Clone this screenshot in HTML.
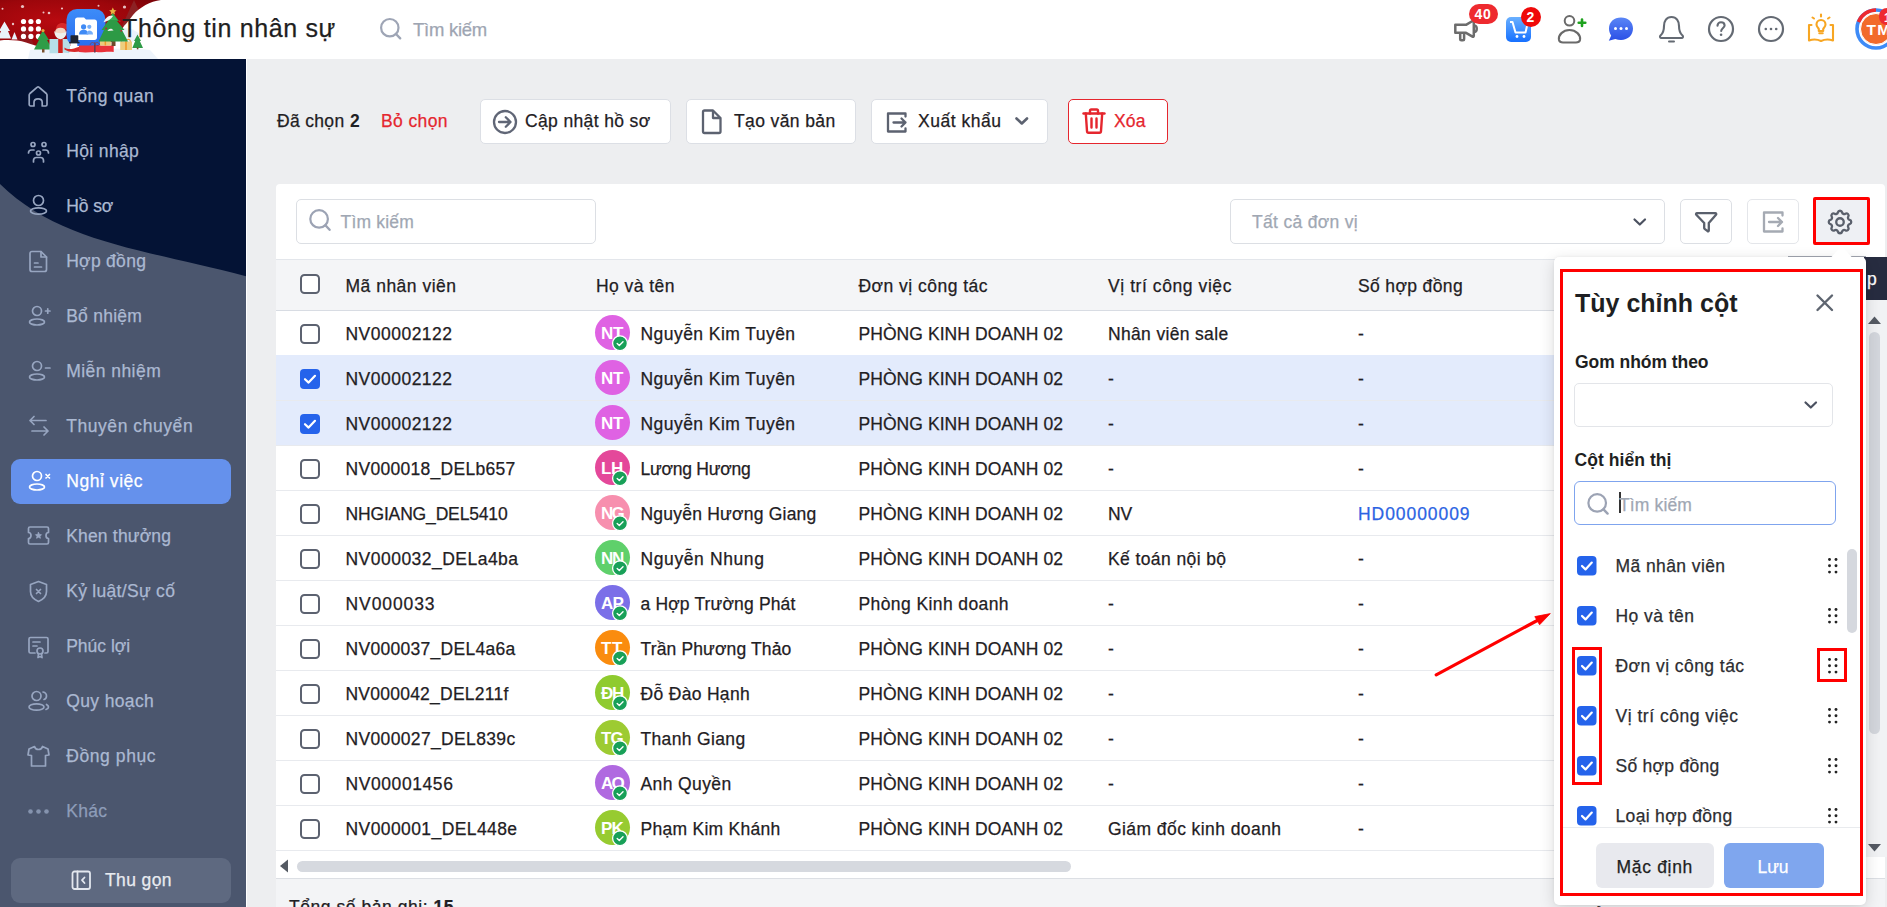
<!DOCTYPE html><html><head><meta charset="utf-8"><style>
html,body{margin:0;padding:0;width:1887px;height:907px;overflow:hidden;background:#EDEEF0;font-family:'Liberation Sans',sans-serif;}
.a{position:absolute;}
.t{white-space:nowrap;-webkit-text-stroke:0.25px currentColor;}
svg.a{overflow:visible;}
</style></head><body>

<div class="a" style="left:0px;top:0px;width:1887px;height:907px;background:#EDEEF0;border-radius:0px;"></div>
<div class="a" style="left:0px;top:0px;width:1887px;height:59px;background:#FFFFFF;border-radius:0px;"></div>
<svg class="a" style="left:0px;top:0px;width:180px;height:59px;" width="180" height="59" viewBox="0 0 180 59">
<defs>
 <radialGradient id="rg" cx="0.35" cy="0.45" r="0.8">
  <stop offset="0" stop-color="#B80A10"/><stop offset="0.6" stop-color="#9C060B"/><stop offset="1" stop-color="#760207"/>
 </radialGradient>
 <linearGradient id="bg1" x1="0" y1="0" x2="0" y2="1">
  <stop offset="0" stop-color="#3D8CF8"/><stop offset="1" stop-color="#2A6DF0"/>
 </linearGradient>
</defs>
<path d="M0,0 H161 V30 L124,38 L98,46 L0,46 Z" fill="url(#rg)"/>
<path d="M122,26 L134,0 L146,26 Z" fill="#8C2224"/>
<path d="M161,0 C150,1.5 140,7 133,15 C129,20 127,23 124,26 L116,38 L124,59 L180,59 L180,0 Z" fill="#FFFFFF"/>
<path d="M124,28 C120,32 118,36 116,40 L130,45 L140,34 C135,30 130,28 124,28 Z" fill="#EAF2FA"/>
<path d="M16,45 L25,24 L34,45 Z" fill="#8E1A1F" opacity="0.85"/>
<path d="M0,40.5 C8,39.5 18,40 26,42.5 C32,44.5 38,46.5 46,48.5 L60,50 L90,52 L130,50 C140,49 150,50 160,52 L162,59 L0,59 Z" fill="#FFFFFF"/>
<path d="M30,50 C50,47 70,48 90,51 C105,49 125,47 150,50 L158,59 L28,59 Z" fill="#EEF4FB"/>
<path d="M4.5,21.5 L10,31 L8,31 L11,38.5 L-2,38.5 L1,31 L-1,31 Z" fill="#E9F2FA"/>
<path d="M14.5,32 L17.5,39.5 L11.5,39.5 Z" fill="#E9F2FA"/>
<g fill="#FFFFFF">
 <circle cx="23.5" cy="21.5" r="2.6"/><circle cx="30.9" cy="21.5" r="2.6"/><circle cx="38.4" cy="21.5" r="2.6"/>
 <circle cx="23.5" cy="28.9" r="2.6"/><circle cx="30.9" cy="28.9" r="2.6"/><circle cx="38.4" cy="28.9" r="2.6"/>
 <circle cx="23.5" cy="36.4" r="2.6"/><circle cx="30.9" cy="36.4" r="2.6"/><circle cx="38.4" cy="36.4" r="2.6"/>
</g>
<g fill="#FFFFFF" opacity="0.75"><circle cx="22.5" cy="6.5" r="1.6"/><circle cx="2.5" cy="8.8" r="1"/><circle cx="43.5" cy="12.4" r="1"/><circle cx="49" cy="13" r="1.3"/><circle cx="62" cy="8.5" r="1.1"/><circle cx="98.5" cy="5.7" r="1"/><circle cx="124.5" cy="7" r="1.6"/><circle cx="13" cy="24" r="1.2"/></g>
<!-- left tree -->
<path d="M43,30.5 L49,40 L47,40 L52.5,49.5 L34,49.5 L39,40 L37,40 Z" fill="#2F9C47"/>
<rect x="42" y="49" width="2.5" height="3.5" fill="#7A5230"/>
<circle cx="43" cy="30.5" r="1.6" fill="#E9A93A"/>
<!-- santa -->
<path d="M49.5,39 H70 V53.3 L62,52.5 L58,53.3 L49.5,53.3 Z" fill="#B7DFE8"/>
<rect x="58.2" y="39" width="4.5" height="14" fill="#D32520"/>
<path d="M56,29 C56.5,24 60,22.8 63,23 C66,23.2 69,25.5 70.5,27.8 L67.5,29.5 Z" fill="#D82A2A"/>
<circle cx="71" cy="27.3" r="1.2" fill="#FFFFFF"/>
<ellipse cx="60.5" cy="31.5" rx="5.3" ry="3.8" fill="#F2D5C2"/>
<path d="M54.2,31 C54.5,37 58,39.2 60.5,39.2 C63,39.2 66.5,37 66.8,31 C64.8,34 56.2,34 54.2,31 Z" fill="#EEF0EC"/>
<!-- app icon -->
<rect x="66.5" y="9" width="39" height="37" rx="10.5" fill="url(#bg1)"/>
<path d="M75,20 C75,18.5 76,17.5 77.5,17.5 L84,17.5 L86,19.5 L94.5,19.5 C96,19.5 97,20.5 97,22 L97,37.5 C97,39 96,40 94.5,40 L77.5,40 C76,40 75,39 75,37.5 Z" fill="#FFFFFF"/>
<circle cx="83.6" cy="26.8" r="2.6" fill="#3F8AF5"/><circle cx="89.3" cy="26.8" r="2.1" fill="#76AEF9"/>
<path d="M79,34.5 C79,31 81.5,29.8 83.6,29.8 C85.8,29.8 88.3,31 88.3,34.5 Z" fill="#3F8AF5"/>
<path d="M86.5,34.5 C86.5,31.5 88,30.5 89.3,30.5 C91,30.5 93,31.5 93,34.5 Z" fill="#76AEF9"/>
<!-- snowman -->
<circle cx="74" cy="54" r="5" fill="#F4F6FA"/>
<circle cx="73.8" cy="45" r="3.6" fill="#FFFFFF"/>
<rect x="70.5" y="35.2" width="7.8" height="7" rx="0.8" fill="#1E2433"/><rect x="69.2" y="41.8" width="10.3" height="1.6" fill="#1E2433"/>
<path d="M64.5,47.5 C68,50 72,49.5 80,46.5 L80.5,51.5 C74,52.5 68,52 64.5,49.5 Z" fill="#D82A2A"/>
<!-- gifts -->
<path d="M79,45.5 H113.7 V52 C108,51 103,52.5 98,52.2 C92,51.8 86,53 79,52 Z" fill="#E8323A"/>
<rect x="94" y="42.5" width="1.6" height="10" fill="#6B3A50"/>
<path d="M90,45 C91,41.5 94,42 94.8,44.5 C95.6,42 98.6,41.5 99.6,45" fill="none" stroke="#7B4A6A" stroke-width="1"/>
<rect x="100" y="38.4" width="10.8" height="7.1" fill="#EACB7C"/><rect x="104.6" y="38.4" width="1.5" height="7.1" fill="#F09A28"/>
<rect x="120.2" y="41.5" width="11.8" height="8.5" fill="#EDCD7E"/><rect x="125.2" y="41.5" width="1.6" height="8.5" fill="#F09A28"/>
<path d="M121.5,41.5 C122,38.5 125,38.8 126,41 C127,38.8 130,38.5 130.5,41.5" fill="none" stroke="#F09A28" stroke-width="1.1"/>
<!-- big tree -->
<rect x="111.5" y="40" width="4" height="6" fill="#6E4A2A"/>
<path d="M112.8,13 L119,21 L117,21 L124.5,30 L122,30 L128,41.5 L98.5,41.5 L104,30 L101.5,30 L108,21 L106.5,21 Z" fill="#2D9A45"/>
<path d="M112.8,13.5 L117.5,20 L108.2,20 Z" fill="#3AB055"/>
<path d="M103.5,22.2 C106,16.5 110,15 113,16 C111,19 108,21.5 103.5,22.2 Z" fill="#F4F4F2"/>
<path d="M107.5,31 C109,28 112,28 113.5,30.5 Z" fill="#F4F4F2"/>
<circle cx="119.7" cy="21.2" r="0.9" fill="#C02030"/><circle cx="106.2" cy="28.5" r="0.9" fill="#C02030"/><circle cx="121.2" cy="30.8" r="0.9" fill="#C02030"/>
<path d="M112.8,7.5 L114,10 L116.5,10.5 L114.5,12 L115,14.5 L112.8,13.2 L110.6,14.5 L111.1,12 L109.1,10.5 L111.6,10 Z" fill="#E8B340"/>
<!-- small tree -->
<path d="M137.5,34.5 L141,41 L139.8,41 L143,48 L132.3,48 L135.2,41 L134,41 Z" fill="#2E9A46"/>
<rect x="136.8" y="47.5" width="1.6" height="1.8" fill="#6E4A2A"/>
</svg>
<div class="a t" style="left:122px;top:15.94px;font-size:25px;line-height:25px;font-weight:400;color:#1F1F1F;letter-spacing:0.648px;">Thông tin nhân sự</div>
<svg class="a" style="left:379px;top:17px;width:24px;height:24px;" width="24" height="24" viewBox="0 0 24 24"><circle cx="10.8" cy="10.7" r="8.7" fill="none" stroke="#9EA5B5" stroke-width="2.2"/><path d="M17,17 L21.2,21.3" stroke="#9EA5B5" stroke-width="2.4" stroke-linecap="round"/></svg>
<div class="a t" style="left:413px;top:21.14px;font-size:18.5px;line-height:18.5px;font-weight:400;color:#9EA5B2;letter-spacing:-0.258px;">Tìm kiếm</div>
<svg class="a" style="left:1452px;top:18px;width:30px;height:26px;" width="30" height="26" viewBox="0 0 30 26"><g fill="none" stroke="#6C6C6C" stroke-width="2.5" stroke-linejoin="round">
<path d="M3.3,6.8 H14 L20.5,3 C21.3,2.6 21.8,3 21.8,3.8 V17.8 C21.8,18.6 21.3,19 20.5,18.6 L14,14.8 H3.3 Z"/>
<path d="M8.2,15 V21.3 C8.2,22 8.6,22.3 9.3,22.3 H11 C11.7,22.3 12.1,22 12.1,21.3 V15"/>
<path d="M22.5,7.5 C25.5,8 25.5,13.5 22.5,14"/></g></svg>
<div class="a" style="left:1469px;top:4px;width:29px;height:20px;background:#EE2A2F;border-radius:10px;"></div>
<div class="a t" style="left:1474.5px;top:7.45px;font-size:14px;line-height:14px;font-weight:700;color:#FFFFFF;letter-spacing:0.711px;-webkit-text-stroke:0;">40</div>
<svg class="a" style="left:1506px;top:17px;width:26px;height:25px;" width="26" height="25" viewBox="0 0 26 25"><defs><linearGradient id="cg" x1="0" y1="0" x2="0" y2="1"><stop offset="0" stop-color="#6AB0FF"/><stop offset="1" stop-color="#1670FF"/></linearGradient></defs>
<rect x="0" y="0" width="25" height="25" rx="5" fill="url(#cg)"/>
<path d="M4,5 H6.5 L9.5,15.5 H19.5 L21,9" fill="none" stroke="#FFFFFF" stroke-width="2" stroke-linejoin="round"/>
<circle cx="11" cy="19.5" r="1.4" fill="#fff"/><circle cx="18" cy="19.5" r="1.4" fill="#fff"/></svg>
<div class="a" style="left:1521px;top:7px;width:20px;height:20px;background:#EF0A0A;border-radius:10px;"></div>
<div class="a t" style="left:1526.5px;top:9.95px;font-size:14px;line-height:14px;font-weight:700;color:#FFFFFF;letter-spacing:0.703px;-webkit-text-stroke:0;">2</div>
<svg class="a" style="left:1556px;top:14px;width:32px;height:30px;" width="32" height="30" viewBox="0 0 32 30"><circle cx="13.5" cy="6.8" r="4.8" fill="none" stroke="#6A6A6A" stroke-width="2"/>
<path d="M3,26 C2,21 7,16 13.5,16 C20,16 25,21 24,26 C23.5,28 22,28.5 20,28.5 H7 C5,28.5 3.5,28 3,26 Z" fill="none" stroke="#6A6A6A" stroke-width="2.1"/>
<path d="M26,5.5 V12 M22.7,8.8 H29.3" stroke="#1FA21F" stroke-width="2.6" stroke-linecap="round"/></svg>
<svg class="a" style="left:1608px;top:17px;width:26px;height:24px;" width="26" height="24" viewBox="0 0 26 24"><defs><linearGradient id="chg" x1="0" y1="0" x2="0" y2="1"><stop offset="0" stop-color="#5A86F6"/><stop offset="1" stop-color="#2A4FE6"/></linearGradient></defs>
<path d="M13,0.5 C20,0.5 25,5 25,11.5 C25,18 20,23 13,23 C11,23 9,22.6 7.3,22 L0.8,23.8 L3.2,18.5 C1.8,16.6 1,14.2 1,11.5 C1,5 6,0.5 13,0.5 Z" fill="url(#chg)"/>
<circle cx="7.5" cy="11.5" r="1.5" fill="#fff"/><circle cx="13" cy="11.5" r="1.5" fill="#fff"/><circle cx="18.5" cy="11.5" r="1.5" fill="#fff"/></svg>
<svg class="a" style="left:1658px;top:15px;width:27px;height:29px;" width="27" height="29" viewBox="0 0 27 29"><path d="M13.5,2 C8.5,2 6,6 6,11 C6,15 5.5,18 2.5,20.5 C1.5,21.5 2,23 3.5,23 H23.5 C25,23 25.5,21.5 24.5,20.5 C21.5,18 21,15 21,11 C21,6 18.5,2 13.5,2 Z" fill="none" stroke="#646A73" stroke-width="2.1" stroke-linejoin="round"/>
<path d="M11,26.5 H16" stroke="#646A73" stroke-width="2" stroke-linecap="round"/></svg>
<svg class="a" style="left:1707px;top:15px;width:28px;height:28px;" width="28" height="28" viewBox="0 0 28 28"><circle cx="14" cy="14" r="12" fill="none" stroke="#646A73" stroke-width="2.2"/>
<path d="M10.5,10.8 C10.5,8.6 12,7.3 14,7.3 C16,7.3 17.6,8.6 17.6,10.5 C17.6,12.8 14.2,13.2 14.2,16" fill="none" stroke="#646A73" stroke-width="2.1" stroke-linecap="round"/>
<circle cx="14.1" cy="19.8" r="1.3" fill="#646A73"/></svg>
<svg class="a" style="left:1757px;top:15px;width:28px;height:28px;" width="28" height="28" viewBox="0 0 28 28"><circle cx="14" cy="14" r="12" fill="none" stroke="#646A73" stroke-width="2.2"/>
<circle cx="8.8" cy="14" r="1.3" fill="#646A73"/><circle cx="14" cy="14" r="1.3" fill="#646A73"/><circle cx="19.2" cy="14" r="1.3" fill="#646A73"/></svg>
<svg class="a" style="left:1807px;top:13px;width:28px;height:30px;" width="28" height="30" viewBox="0 0 28 30"><g fill="none" stroke="#F7A623" stroke-width="2.1" stroke-linecap="round" stroke-linejoin="round">
<path d="M14,1.5 V3.5 M5.5,4.5 L7,5.5 M22.5,4.5 L21,5.5"/>
<path d="M14,7 C11,7 9.5,9.2 9.5,11.5 C9.5,13.5 11,14.5 11.8,16 V18 H16.2 V16 C17,14.5 18.5,13.5 18.5,11.5 C18.5,9.2 17,7 14,7 Z"/>
<path d="M12.3,20.2 H15.7"/>
<path d="M4.5,12 H2 V27.5 C6,26 10,26 14,28 C18,26 22,26 26,27.5 V12 H23.5"/>
</g></svg>
<svg class="a" style="left:1855px;top:8px;width:40px;height:42px;" width="40" height="42" viewBox="0 0 40 42"><circle cx="21" cy="21" r="19" fill="none" stroke="#3E8BF7" stroke-width="3.6"/>
<path d="M3.5,14 A19,19 0 0 1 21,2" fill="none" stroke="#EE2A2F" stroke-width="3.6"/>
<circle cx="21" cy="21" r="15.5" fill="#F26A2B" stroke="#FFFFFF" stroke-width="1"/></svg>
<div class="a t" style="left:1866.5px;top:22.18px;font-size:15.5px;line-height:15.5px;font-weight:700;color:#FFFFFF;letter-spacing:1.305px;-webkit-text-stroke:0;">TM</div>
<div class="a" style="left:1879px;top:8px;width:16px;height:17px;background:#EE2A2F;border-radius:8px;"></div>
<div class="a t" style="left:1884px;top:11.64px;font-size:12px;line-height:12px;font-weight:700;color:#FFFFFF;-webkit-text-stroke:0;">1</div>
<div class="a" style="left:0px;top:59px;width:246px;height:848px;background:#4B566E;border-radius:0px;"></div>
<svg class="a" style="left:0px;top:59px;width:246px;height:260px;" width="246" height="260" viewBox="0 0 246 260"><path d="M0,0 H246 V217.3 C145.6,190.4 60.3,184 0,125 Z" fill="#041335"/></svg>
<div class="a" style="left:246px;top:59px;width:1px;height:848px;background:#FFFFFF;border-radius:0px;"></div>
<div class="a" style="left:11px;top:459px;width:220px;height:45px;background:#6591EC;border-radius:9px;"></div>
<div class="a" style="left:11px;top:858px;width:220px;height:45px;background:#5E6980;border-radius:9px;"></div>
<div class="a t" style="left:66.2px;top:87.99px;font-size:17.5px;line-height:17.5px;font-weight:400;color:#ABB9D2;letter-spacing:0.479px;">Tổng quan</div>
<div class="a t" style="left:66.2px;top:142.99px;font-size:17.5px;line-height:17.5px;font-weight:400;color:#ABB9D2;letter-spacing:0.367px;">Hội nhập</div>
<div class="a t" style="left:66.2px;top:197.99px;font-size:17.5px;line-height:17.5px;font-weight:400;color:#ABB9D2;letter-spacing:-0.094px;">Hồ sơ</div>
<div class="a t" style="left:66.2px;top:252.99px;font-size:17.5px;line-height:17.5px;font-weight:400;color:#ABB9D2;letter-spacing:0.295px;">Hợp đồng</div>
<div class="a t" style="left:66.2px;top:307.99px;font-size:17.5px;line-height:17.5px;font-weight:400;color:#ABB9D2;letter-spacing:0.258px;">Bổ nhiệm</div>
<div class="a t" style="left:66.2px;top:362.99px;font-size:17.5px;line-height:17.5px;font-weight:400;color:#ABB9D2;letter-spacing:0.453px;">Miễn nhiệm</div>
<div class="a t" style="left:66.2px;top:417.99px;font-size:17.5px;line-height:17.5px;font-weight:400;color:#ABB9D2;letter-spacing:0.564px;">Thuyên chuyển</div>
<div class="a t" style="left:66.2px;top:472.99px;font-size:17.5px;line-height:17.5px;font-weight:400;color:#FFFFFF;letter-spacing:0.557px;">Nghỉ việc</div>
<div class="a t" style="left:66.2px;top:527.99px;font-size:17.5px;line-height:17.5px;font-weight:400;color:#ABB9D2;letter-spacing:0.183px;">Khen thưởng</div>
<div class="a t" style="left:66.2px;top:582.99px;font-size:17.5px;line-height:17.5px;font-weight:400;color:#ABB9D2;letter-spacing:0.299px;">Kỷ luật/Sự cố</div>
<div class="a t" style="left:66.2px;top:637.99px;font-size:17.5px;line-height:17.5px;font-weight:400;color:#ABB9D2;letter-spacing:-0.002px;">Phúc lợi</div>
<div class="a t" style="left:66.2px;top:692.99px;font-size:17.5px;line-height:17.5px;font-weight:400;color:#ABB9D2;letter-spacing:0.373px;">Quy hoạch</div>
<div class="a t" style="left:66.2px;top:747.99px;font-size:17.5px;line-height:17.5px;font-weight:400;color:#ABB9D2;letter-spacing:0.594px;">Đồng phục</div>
<div class="a t" style="left:66.2px;top:802.99px;font-size:17.5px;line-height:17.5px;font-weight:400;color:#8E9DB9;letter-spacing:0.277px;">Khác</div>
<div class="a t" style="left:105px;top:871.99px;font-size:17.5px;line-height:17.5px;font-weight:400;color:#E8EBF0;letter-spacing:0.397px;">Thu gọn</div>
<svg class="a" style="left:26px;top:84px;width:26px;height:26px;" width="26" height="26" viewBox="0 0 26 26"><g fill="none" stroke="#97A5C0" stroke-width="1.7" stroke-linecap="round" stroke-linejoin="round"><path d="M3.2,20.5 V11 C3.2,10.4 3.5,9.9 3.9,9.5 L11.3,3.2 C11.7,2.8 12.5,2.8 12.9,3.2 L20.3,9.5 C20.7,9.9 21,10.4 21,11 V20.5 C21,21.3 20.4,22 19.6,22 H16.2 V18.3 C16.2,16.2 14.5,14.8 12.1,14.8 C9.7,14.8 8,16.2 8,18.3 V22 H4.6 C3.8,22 3.2,21.3 3.2,20.5 Z"/></g></svg>
<svg class="a" style="left:26px;top:139px;width:26px;height:26px;" width="26" height="26" viewBox="0 0 26 26"><g fill="none" stroke="#97A5C0" stroke-width="1.7" stroke-linecap="round" stroke-linejoin="round"><circle cx="7" cy="5.5" r="2"/><circle cx="18" cy="5.5" r="2"/><circle cx="12.5" cy="14" r="2"/><path d="M2.5,14 C2.5,12 3.5,11 5.5,11 H8"/><path d="M22.5,14 C22.5,12 21.5,11 19.5,11 H17"/><path d="M7.5,23 V21.5 C7.5,19.5 8.5,18.5 10.5,18.5 H14.5 C16.5,18.5 17.5,19.5 17.5,21.5 V23"/></g></svg>
<svg class="a" style="left:26px;top:194px;width:26px;height:26px;" width="26" height="26" viewBox="0 0 26 26"><g fill="none" stroke="#97A5C0" stroke-width="1.7" stroke-linecap="round" stroke-linejoin="round"><circle cx="12.5" cy="6.5" r="5"/><ellipse cx="12.5" cy="17" rx="8" ry="3.2"/></g></svg>
<svg class="a" style="left:26px;top:249px;width:26px;height:26px;" width="26" height="26" viewBox="0 0 26 26"><g fill="none" stroke="#97A5C0" stroke-width="1.7" stroke-linecap="round" stroke-linejoin="round"><path d="M6,2.5 H15 L20.5,8 V20.5 C20.5,21.8 19.8,22.5 18.5,22.5 H6 C4.7,22.5 4,21.8 4,20.5 V4.5 C4,3.2 4.7,2.5 6,2.5 Z"/><path d="M15,2.5 V8 H20.5"/><path d="M8.5,14 H12 M8.5,18 H15.5"/></g></svg>
<svg class="a" style="left:26px;top:304px;width:26px;height:26px;" width="26" height="26" viewBox="0 0 26 26"><g fill="none" stroke="#97A5C0" stroke-width="1.7" stroke-linecap="round" stroke-linejoin="round"><circle cx="11" cy="7" r="4.5"/><ellipse cx="11" cy="18" rx="7.5" ry="3"/><path d="M19.5,7 H24 M21.75,4.75 V9.25"/></g></svg>
<svg class="a" style="left:26px;top:359px;width:26px;height:26px;" width="26" height="26" viewBox="0 0 26 26"><g fill="none" stroke="#97A5C0" stroke-width="1.7" stroke-linecap="round" stroke-linejoin="round"><circle cx="11" cy="7" r="4.5"/><ellipse cx="11" cy="18" rx="7.5" ry="3"/><path d="M19.5,9 H24"/></g></svg>
<svg class="a" style="left:26px;top:414px;width:26px;height:26px;" width="26" height="26" viewBox="0 0 26 26"><g fill="none" stroke="#97A5C0" stroke-width="1.7" stroke-linecap="round" stroke-linejoin="round"><path d="M20,6.5 H4 M8,2.5 L4,6.5 L8,10.5"/><path d="M6,17 H22 M18,13 L22,17 L18,21"/></g></svg>
<svg class="a" style="left:26px;top:469px;width:26px;height:26px;" width="26" height="26" viewBox="0 0 26 26"><g fill="none" stroke="#FFFFFF" stroke-width="1.7" stroke-linecap="round" stroke-linejoin="round"><circle cx="11" cy="7" r="4.5"/><ellipse cx="11" cy="18" rx="7.5" ry="3"/><path d="M20,5.5 L23.5,9 M23.5,5.5 L20,9"/></g></svg>
<svg class="a" style="left:26px;top:524px;width:26px;height:26px;" width="26" height="26" viewBox="0 0 26 26"><g fill="none" stroke="#97A5C0" stroke-width="1.7" stroke-linecap="round" stroke-linejoin="round"><path d="M4,3 H21 C22,3 22.5,3.5 22.5,4.5 V8.5 C21,8.5 20,9.8 20,11.5 C20,13.2 21,14.5 22.5,14.5 V18.5 C22.5,19.5 22,20 21,20 H4 C3,20 2.5,19.5 2.5,18.5 V14.5 C4,14.5 5,13.2 5,11.5 C5,9.8 4,8.5 2.5,8.5 V4.5 C2.5,3.5 3,3 4,3 Z"/><path d="M12.5,8.5 L13.5,10.5 L15.5,10.7 L14,12.2 L14.4,14.3 L12.5,13.2 L10.6,14.3 L11,12.2 L9.5,10.7 L11.5,10.5 Z" fill="#97A5C0" stroke-width="0.8"/></g></svg>
<svg class="a" style="left:26px;top:579px;width:26px;height:26px;" width="26" height="26" viewBox="0 0 26 26"><g fill="none" stroke="#97A5C0" stroke-width="1.7" stroke-linecap="round" stroke-linejoin="round"><path d="M12.5,2.5 L20.5,5.5 V12.5 C20.5,17 17,20.5 12.5,22.5 C8,20.5 4.5,17 4.5,12.5 V5.5 Z"/><path d="M10.5,10.5 L14.5,14.5 M14.5,10.5 L10.5,14.5"/></g></svg>
<svg class="a" style="left:26px;top:634px;width:26px;height:26px;" width="26" height="26" viewBox="0 0 26 26"><g fill="none" stroke="#97A5C0" stroke-width="1.7" stroke-linecap="round" stroke-linejoin="round"><path d="M9,19 H4.5 C3.5,19 3,18.5 3,17.5 V5 C3,4 3.5,3.5 4.5,3.5 H20.5 C21.5,3.5 22,4 22,5 V17.5 C22,18.5 21.5,19 20.5,19 H19"/><path d="M7,8 H14 M7,12 H11"/><circle cx="14" cy="17" r="3"/><path d="M12.5,20 L12,23.5 L14,22.5 L16,23.5 L15.5,20"/></g></svg>
<svg class="a" style="left:26px;top:689px;width:26px;height:26px;" width="26" height="26" viewBox="0 0 26 26"><g fill="none" stroke="#97A5C0" stroke-width="1.7" stroke-linecap="round" stroke-linejoin="round"><circle cx="10.5" cy="7" r="4.5"/><ellipse cx="10.5" cy="18" rx="7.5" ry="3.2"/><path d="M17,3 C19.5,3.5 20.5,5 20.5,7 C20.5,8.5 19.5,10 18,10.5"/><path d="M20.5,15.5 C22,16.5 22.5,17.5 22.5,18 C22.5,19 21.5,20 20,20.5"/></g></svg>
<svg class="a" style="left:26px;top:744px;width:26px;height:26px;" width="26" height="26" viewBox="0 0 26 26"><g fill="none" stroke="#97A5C0" stroke-width="1.7" stroke-linecap="round" stroke-linejoin="round"><path d="M8.5,2.5 L3,5 L2,11 L5.5,11.5 V22 H19.5 V11.5 L23,11 L22,5 L16.5,2.5 C16,4.5 14.5,5.5 12.5,5.5 C10.5,5.5 9,4.5 8.5,2.5 Z"/></g></svg>
<svg class="a" style="left:26px;top:799px;width:26px;height:26px;" width="26" height="26" viewBox="0 0 26 26"><circle cx="4.5" cy="12.5" r="2.3" fill="#8593AE"/><circle cx="12.5" cy="12.5" r="2.3" fill="#8593AE"/><circle cx="20.5" cy="12.5" r="2.3" fill="#8593AE"/></svg>
<svg class="a" style="left:71px;top:870px;width:21px;height:21px;" width="21" height="21" viewBox="0 0 21 21"><g fill="none" stroke="#E3E7EE" stroke-width="1.8" stroke-linejoin="round" stroke-linecap="round"><rect x="1.5" y="1.5" width="17.5" height="17.5" rx="2"/><path d="M6.5,1.5 V19"/><path d="M13.5,7.5 L11,10.2 L13.5,13"/></g></svg>
<div class="a t" style="left:277px;top:112.99px;font-size:17.5px;line-height:17.5px;font-weight:400;color:#1F2023;letter-spacing:0.330px;">Đã chọn</div>
<div class="a t" style="left:350px;top:112.99px;font-size:17.5px;line-height:17.5px;font-weight:700;color:#1F2023;letter-spacing:0.766px;-webkit-text-stroke:0;">2</div>
<div class="a t" style="left:381px;top:112.99px;font-size:17.5px;line-height:17.5px;font-weight:400;color:#E5262E;letter-spacing:0.397px;">Bỏ chọn</div>
<div class="a" style="left:480px;top:99px;width:191px;height:45px;background:#FFFFFF;border-radius:5px;border:1px solid #DCDFE5;box-sizing:border-box;"></div>
<div class="a" style="left:686px;top:99px;width:170px;height:45px;background:#FFFFFF;border-radius:5px;border:1px solid #DCDFE5;box-sizing:border-box;"></div>
<div class="a" style="left:871px;top:99px;width:177px;height:45px;background:#FFFFFF;border-radius:5px;border:1px solid #DCDFE5;box-sizing:border-box;"></div>
<div class="a" style="left:1068px;top:99px;width:100px;height:45px;background:#FFFFFF;border-radius:5px;border:1px solid #E5262E;box-sizing:border-box;"></div>
<svg class="a" style="left:491px;top:109px;width:28px;height:28px;" width="28" height="28" viewBox="0 0 28 28"><g fill="none" stroke="#606676" stroke-width="2.3" stroke-linecap="round" stroke-linejoin="round"><circle cx="14" cy="13" r="11"/><path d="M8,13 H19.5 M14.8,8.3 L19.5,13 L14.8,17.7"/></g></svg>
<div class="a t" style="left:525px;top:112.99px;font-size:17.5px;line-height:17.5px;font-weight:400;color:#1F2023;letter-spacing:0.360px;">Cập nhật hồ sơ</div>
<svg class="a" style="left:700px;top:108px;width:24px;height:28px;" width="24" height="28" viewBox="0 0 24 28"><path d="M4.5,2.5 H13 L20.5,10 V23.5 C20.5,24.5 20,25 19,25 H4.5 C3.5,25 3,24.5 3,23.5 V4 C3,3 3.5,2.5 4.5,2.5 Z M13,2.5 V10 H20.5" fill="none" stroke="#5C6270" stroke-width="2.3" stroke-linejoin="round"/></svg>
<div class="a t" style="left:734px;top:112.99px;font-size:17.5px;line-height:17.5px;font-weight:400;color:#1F2023;letter-spacing:0.382px;">Tạo văn bản</div>
<svg class="a" style="left:885px;top:110px;width:26px;height:25px;" width="26" height="25" viewBox="0 0 26 25"><g fill="none" stroke="#5C6270" stroke-width="2.3" stroke-linecap="round" stroke-linejoin="round"><path d="M20.5,6.5 V3.5 H3 V21.5 H20.5 V18.5"/><path d="M8.5,12.5 H20.5 M16.5,8.5 L20.5,12.5 L16.5,16.5"/></g></svg>
<div class="a t" style="left:918px;top:112.99px;font-size:17.5px;line-height:17.5px;font-weight:400;color:#1F2023;letter-spacing:0.521px;">Xuất khẩu</div>
<svg class="a" style="left:1014px;top:114px;width:16px;height:14px;" width="16" height="14" viewBox="0 0 16 14"><path d="M2.5,4.5 L7.8,9.5 L13,4.5" fill="none" stroke="#5C6270" stroke-width="2.6" stroke-linecap="round" stroke-linejoin="round"/></svg>
<svg class="a" style="left:1081px;top:107px;width:26px;height:28px;" width="26" height="28" viewBox="0 0 26 28"><g fill="none" stroke="#E5262E" stroke-width="2.4" stroke-linecap="round" stroke-linejoin="round"><path d="M2.5,6.5 H23.5"/><path d="M9,6.5 V3.8 C9,3 9.5,2.5 10.3,2.5 H15.7 C16.5,2.5 17,3 17,3.8 V6.5"/><path d="M4.8,6.5 L6,24 C6,25 6.6,25.7 7.6,25.7 H18.4 C19.4,25.7 20,25 20,24 L21.2,6.5"/><path d="M10.5,11.5 V20.5 M15.5,11.5 V20.5"/></g></svg>
<div class="a t" style="left:1114px;top:112.99px;font-size:17.5px;line-height:17.5px;font-weight:400;color:#E5262E;letter-spacing:0.120px;">Xóa</div>
<div class="a" style="left:276px;top:184px;width:1609px;height:723px;background:#FFFFFF;border-radius:4px;"></div>
<div class="a" style="left:296px;top:199px;width:300px;height:45px;background:#FFFFFF;border-radius:5px;border:1px solid #DCDFE4;box-sizing:border-box;"></div>
<svg class="a" style="left:308px;top:208px;width:24px;height:24px;" width="24" height="24" viewBox="0 0 24 24"><circle cx="11.1" cy="10.9" r="8.8" fill="none" stroke="#9CA3B4" stroke-width="2.2"/><path d="M17.4,17.3 L21.6,21.8" stroke="#9CA3B4" stroke-width="2.4" stroke-linecap="round"/></svg>
<div class="a t" style="left:340.5px;top:213.99px;font-size:17.5px;line-height:17.5px;font-weight:400;color:#A0A7B3;letter-spacing:0.193px;">Tìm kiếm</div>
<div class="a" style="left:1230px;top:199px;width:435px;height:45px;background:#FFFFFF;border-radius:5px;border:1px solid #DCDFE4;box-sizing:border-box;"></div>
<div class="a t" style="left:1252px;top:213.99px;font-size:17.5px;line-height:17.5px;font-weight:400;color:#A0A7B3;letter-spacing:0.312px;">Tất cả đơn vị</div>
<svg class="a" style="left:1632px;top:215px;width:16px;height:14px;" width="16" height="14" viewBox="0 0 16 14"><path d="M2.5,4.5 L7.8,9.5 L13,4.5" fill="none" stroke="#4B5160" stroke-width="2.2" stroke-linecap="round" stroke-linejoin="round"/></svg>
<div class="a" style="left:1680px;top:199px;width:52px;height:45px;background:#FFFFFF;border-radius:5px;border:1px solid #DCDFE4;box-sizing:border-box;"></div>
<svg class="a" style="left:1693px;top:209px;width:26px;height:26px;" width="26" height="26" viewBox="0 0 26 26"><path d="M4,4.2 H22.3 C23.2,4.2 23.6,5 23,5.7 L15.8,14 V21.5 C15.8,22.3 15.2,22.6 14.6,22.2 L11.6,19.9 C11.3,19.7 11.2,19.4 11.2,19 V14 L3.3,5.7 C2.7,5 3.1,4.2 4,4.2 Z" fill="none" stroke="#5A606C" stroke-width="2.3" stroke-linejoin="round"/></svg>
<div class="a" style="left:1747px;top:199px;width:52px;height:45px;background:#FFFFFF;border-radius:5px;border:1px solid #E4E6EA;box-sizing:border-box;"></div>
<svg class="a" style="left:1761px;top:210px;width:26px;height:24px;" width="26" height="24" viewBox="0 0 26 24"><g fill="none" stroke="#A5AAB3" stroke-width="2.3" stroke-linecap="round" stroke-linejoin="round"><path d="M21.5,5.5 V2.5 H3 V21.5 H21.5 V18.5"/><path d="M8,12 H21 M17,8 L21,12 L17,16"/></g></svg>
<div class="a" style="left:1813px;top:197px;width:57px;height:48px;background:#EEF0F4;border-radius:2px;border:3px solid #FF0000;box-sizing:border-box;"></div>
<svg class="a" style="left:1825px;top:207px;width:30px;height:30px;" width="30" height="30" viewBox="0 0 24 24"><g fill="none" stroke="#5A606C" stroke-width="1.85" stroke-linecap="round" stroke-linejoin="round"><path d="M10.325 4.317c.426 -1.756 2.924 -1.756 3.35 0a1.724 1.724 0 0 0 2.573 1.066c1.543 -.94 3.31 .826 2.37 2.37a1.724 1.724 0 0 0 1.065 2.572c1.756 .426 1.756 2.924 0 3.35a1.724 1.724 0 0 0 -1.066 2.573c.94 1.543 -.826 3.31 -2.37 2.37a1.724 1.724 0 0 0 -2.572 1.065c-.426 1.756 -2.924 1.756 -3.35 0a1.724 1.724 0 0 0 -2.573 -1.066c-1.543 .94 -3.310 -.826 -2.370 -2.370a1.724 1.724 0 0 0 -1.065 -2.572c-1.756 -.426 -1.756 -2.924 0 -3.350a1.724 1.724 0 0 0 1.066 -2.573c-.94 -1.543 .826 -3.310 2.370 -2.370c1 .608 2.296 .07 2.572 -1.065z"/><circle cx="12" cy="12" r="3"/></g></svg>
<div class="a" style="left:276px;top:259px;width:1590px;height:51px;background:#F4F5F7;border-radius:0px;"></div>
<div class="a" style="left:276px;top:259px;width:1590px;height:1px;background:#E3E6EB;border-radius:0px;"></div>
<div class="a" style="left:276px;top:310px;width:1590px;height:1px;background:#D8DCE3;border-radius:0px;"></div>
<div class="a" style="left:276px;top:355px;width:1590px;height:1px;background:#E8EAEE;border-radius:0px;"></div>
<svg class="a" style="left:300px;top:324px;width:20px;height:20px;" width="20" height="20" viewBox="0 0 20 20"><rect x="1" y="1" width="18" height="18" rx="3.5" fill="#FFFFFF" stroke="#5C6270" stroke-width="2"/></svg>
<div class="a t" style="left:345.5px;top:326.49px;font-size:17.5px;line-height:17.5px;font-weight:400;color:#1F2023;letter-spacing:0.483px;">NV00002122</div>
<svg class="a" style="left:595px;top:315px;width:36px;height:36px;" width="36" height="36" viewBox="0 0 36 36"><circle cx="17.5" cy="17.5" r="17.5" fill="#DF62E3"/></svg>
<div class="a t" style="left:601px;top:325.41px;font-size:17px;line-height:17px;font-weight:700;color:#FFFFFF;letter-spacing:-0.336px;-webkit-text-stroke:0;">NT</div>
<svg class="a" style="left:612px;top:335px;width:17px;height:17px;" width="17" height="17" viewBox="0 0 17 17"><circle cx="8" cy="8.3" r="7.4" fill="#18A058" stroke="#FFFFFF" stroke-width="1.3"/><path d="M5.2,8.5 L7.3,10.4 L11,6.8" fill="none" stroke="#fff" stroke-width="1.4" stroke-linecap="round" stroke-linejoin="round"/></svg>
<div class="a t" style="left:640.5px;top:326.49px;font-size:17.5px;line-height:17.5px;font-weight:400;color:#1F2023;letter-spacing:0.446px;">Nguyễn Kim Tuyên</div>
<div class="a t" style="left:858.5px;top:326.49px;font-size:17.5px;line-height:17.5px;font-weight:400;color:#1F2023;letter-spacing:0.067px;">PHÒNG KINH DOANH 02</div>
<div class="a t" style="left:1108px;top:326.49px;font-size:17.5px;line-height:17.5px;font-weight:400;color:#1F2023;letter-spacing:0.337px;">Nhân viên sale</div>
<div class="a t" style="left:1358px;top:326.49px;font-size:17.5px;line-height:17.5px;font-weight:400;color:#1F2023;letter-spacing:0.172px;">-</div>
<div class="a" style="left:276px;top:355px;width:1590px;height:45px;background:#E3EBFC;border-radius:0px;"></div>
<div class="a" style="left:276px;top:400px;width:1590px;height:1px;background:#E8EAEE;border-radius:0px;"></div>
<svg class="a" style="left:300px;top:369px;width:20px;height:20px;" width="20" height="20" viewBox="0 0 20 20"><rect x="0" y="0" width="20" height="20" rx="4" fill="#2563EB"/><path d="M5,10.2 L8.6,13.6 L15,6.8" fill="none" stroke="#FFFFFF" stroke-width="2.2" stroke-linecap="round" stroke-linejoin="round"/></svg>
<div class="a t" style="left:345.5px;top:371.49px;font-size:17.5px;line-height:17.5px;font-weight:400;color:#1F2023;letter-spacing:0.483px;">NV00002122</div>
<svg class="a" style="left:595px;top:360px;width:36px;height:36px;" width="36" height="36" viewBox="0 0 36 36"><circle cx="17.5" cy="17.5" r="17.5" fill="#DF62E3"/></svg>
<div class="a t" style="left:601px;top:370.41px;font-size:17px;line-height:17px;font-weight:700;color:#FFFFFF;letter-spacing:-0.336px;-webkit-text-stroke:0;">NT</div>
<div class="a t" style="left:640.5px;top:371.49px;font-size:17.5px;line-height:17.5px;font-weight:400;color:#1F2023;letter-spacing:0.446px;">Nguyễn Kim Tuyên</div>
<div class="a t" style="left:858.5px;top:371.49px;font-size:17.5px;line-height:17.5px;font-weight:400;color:#1F2023;letter-spacing:0.067px;">PHÒNG KINH DOANH 02</div>
<div class="a t" style="left:1108px;top:371.49px;font-size:17.5px;line-height:17.5px;font-weight:400;color:#1F2023;letter-spacing:0.172px;">-</div>
<div class="a t" style="left:1358px;top:371.49px;font-size:17.5px;line-height:17.5px;font-weight:400;color:#1F2023;letter-spacing:0.172px;">-</div>
<div class="a" style="left:276px;top:401px;width:1590px;height:45px;background:#E3EBFC;border-radius:0px;"></div>
<div class="a" style="left:276px;top:445px;width:1590px;height:1px;background:#E8EAEE;border-radius:0px;"></div>
<svg class="a" style="left:300px;top:414px;width:20px;height:20px;" width="20" height="20" viewBox="0 0 20 20"><rect x="0" y="0" width="20" height="20" rx="4" fill="#2563EB"/><path d="M5,10.2 L8.6,13.6 L15,6.8" fill="none" stroke="#FFFFFF" stroke-width="2.2" stroke-linecap="round" stroke-linejoin="round"/></svg>
<div class="a t" style="left:345.5px;top:416.49px;font-size:17.5px;line-height:17.5px;font-weight:400;color:#1F2023;letter-spacing:0.483px;">NV00002122</div>
<svg class="a" style="left:595px;top:405px;width:36px;height:36px;" width="36" height="36" viewBox="0 0 36 36"><circle cx="17.5" cy="17.5" r="17.5" fill="#DF62E3"/></svg>
<div class="a t" style="left:601px;top:415.41px;font-size:17px;line-height:17px;font-weight:700;color:#FFFFFF;letter-spacing:-0.336px;-webkit-text-stroke:0;">NT</div>
<div class="a t" style="left:640.5px;top:416.49px;font-size:17.5px;line-height:17.5px;font-weight:400;color:#1F2023;letter-spacing:0.446px;">Nguyễn Kim Tuyên</div>
<div class="a t" style="left:858.5px;top:416.49px;font-size:17.5px;line-height:17.5px;font-weight:400;color:#1F2023;letter-spacing:0.067px;">PHÒNG KINH DOANH 02</div>
<div class="a t" style="left:1108px;top:416.49px;font-size:17.5px;line-height:17.5px;font-weight:400;color:#1F2023;letter-spacing:0.172px;">-</div>
<div class="a t" style="left:1358px;top:416.49px;font-size:17.5px;line-height:17.5px;font-weight:400;color:#1F2023;letter-spacing:0.172px;">-</div>
<div class="a" style="left:276px;top:490px;width:1590px;height:1px;background:#E8EAEE;border-radius:0px;"></div>
<svg class="a" style="left:300px;top:459px;width:20px;height:20px;" width="20" height="20" viewBox="0 0 20 20"><rect x="1" y="1" width="18" height="18" rx="3.5" fill="#FFFFFF" stroke="#5C6270" stroke-width="2"/></svg>
<div class="a t" style="left:345.5px;top:461.49px;font-size:17.5px;line-height:17.5px;font-weight:400;color:#1F2023;letter-spacing:0.286px;">NV000018_DELb657</div>
<svg class="a" style="left:595px;top:450px;width:36px;height:36px;" width="36" height="36" viewBox="0 0 36 36"><circle cx="17.5" cy="17.5" r="17.5" fill="#E4489A"/></svg>
<div class="a t" style="left:601px;top:460.41px;font-size:17px;line-height:17px;font-weight:700;color:#FFFFFF;letter-spacing:-0.336px;-webkit-text-stroke:0;">LH</div>
<svg class="a" style="left:612px;top:470px;width:17px;height:17px;" width="17" height="17" viewBox="0 0 17 17"><circle cx="8" cy="8.3" r="7.4" fill="#18A058" stroke="#FFFFFF" stroke-width="1.3"/><path d="M5.2,8.5 L7.3,10.4 L11,6.8" fill="none" stroke="#fff" stroke-width="1.4" stroke-linecap="round" stroke-linejoin="round"/></svg>
<div class="a t" style="left:640.5px;top:461.49px;font-size:17.5px;line-height:17.5px;font-weight:400;color:#1F2023;letter-spacing:-0.232px;">Lương Hương</div>
<div class="a t" style="left:858.5px;top:461.49px;font-size:17.5px;line-height:17.5px;font-weight:400;color:#1F2023;letter-spacing:0.067px;">PHÒNG KINH DOANH 02</div>
<div class="a t" style="left:1108px;top:461.49px;font-size:17.5px;line-height:17.5px;font-weight:400;color:#1F2023;letter-spacing:0.172px;">-</div>
<div class="a t" style="left:1358px;top:461.49px;font-size:17.5px;line-height:17.5px;font-weight:400;color:#1F2023;letter-spacing:0.172px;">-</div>
<div class="a" style="left:276px;top:535px;width:1590px;height:1px;background:#E8EAEE;border-radius:0px;"></div>
<svg class="a" style="left:300px;top:504px;width:20px;height:20px;" width="20" height="20" viewBox="0 0 20 20"><rect x="1" y="1" width="18" height="18" rx="3.5" fill="#FFFFFF" stroke="#5C6270" stroke-width="2"/></svg>
<div class="a t" style="left:345.5px;top:506.49px;font-size:17.5px;line-height:17.5px;font-weight:400;color:#1F2023;letter-spacing:-0.159px;">NHGIANG_DEL5410</div>
<svg class="a" style="left:595px;top:495px;width:36px;height:36px;" width="36" height="36" viewBox="0 0 36 36"><circle cx="17.5" cy="17.5" r="17.5" fill="#F78FAE"/></svg>
<div class="a t" style="left:601px;top:505.41px;font-size:17px;line-height:17px;font-weight:700;color:#FFFFFF;letter-spacing:-1.750px;-webkit-text-stroke:0;">NG</div>
<svg class="a" style="left:612px;top:515px;width:17px;height:17px;" width="17" height="17" viewBox="0 0 17 17"><circle cx="8" cy="8.3" r="7.4" fill="#18A058" stroke="#FFFFFF" stroke-width="1.3"/><path d="M5.2,8.5 L7.3,10.4 L11,6.8" fill="none" stroke="#fff" stroke-width="1.4" stroke-linecap="round" stroke-linejoin="round"/></svg>
<div class="a t" style="left:640.5px;top:506.49px;font-size:17.5px;line-height:17.5px;font-weight:400;color:#1F2023;letter-spacing:0.220px;">Nguyễn Hương Giang</div>
<div class="a t" style="left:858.5px;top:506.49px;font-size:17.5px;line-height:17.5px;font-weight:400;color:#1F2023;letter-spacing:0.067px;">PHÒNG KINH DOANH 02</div>
<div class="a t" style="left:1108px;top:506.49px;font-size:17.5px;line-height:17.5px;font-weight:400;color:#1F2023;letter-spacing:-0.156px;">NV</div>
<div class="a t" style="left:1358px;top:506.49px;font-size:17.5px;line-height:17.5px;font-weight:400;color:#2B63E3;letter-spacing:0.936px;">HD00000009</div>
<div class="a" style="left:276px;top:580px;width:1590px;height:1px;background:#E8EAEE;border-radius:0px;"></div>
<svg class="a" style="left:300px;top:549px;width:20px;height:20px;" width="20" height="20" viewBox="0 0 20 20"><rect x="1" y="1" width="18" height="18" rx="3.5" fill="#FFFFFF" stroke="#5C6270" stroke-width="2"/></svg>
<div class="a t" style="left:345.5px;top:551.49px;font-size:17.5px;line-height:17.5px;font-weight:400;color:#1F2023;letter-spacing:0.474px;">NV000032_DELa4ba</div>
<svg class="a" style="left:595px;top:540px;width:36px;height:36px;" width="36" height="36" viewBox="0 0 36 36"><circle cx="17.5" cy="17.5" r="17.5" fill="#5FD06B"/></svg>
<div class="a t" style="left:601px;top:550.41px;font-size:17px;line-height:17px;font-weight:700;color:#FFFFFF;letter-spacing:-1.281px;-webkit-text-stroke:0;">NN</div>
<svg class="a" style="left:612px;top:560px;width:17px;height:17px;" width="17" height="17" viewBox="0 0 17 17"><circle cx="8" cy="8.3" r="7.4" fill="#18A058" stroke="#FFFFFF" stroke-width="1.3"/><path d="M5.2,8.5 L7.3,10.4 L11,6.8" fill="none" stroke="#fff" stroke-width="1.4" stroke-linecap="round" stroke-linejoin="round"/></svg>
<div class="a t" style="left:640.5px;top:551.49px;font-size:17.5px;line-height:17.5px;font-weight:400;color:#1F2023;letter-spacing:0.604px;">Nguyễn Nhung</div>
<div class="a t" style="left:858.5px;top:551.49px;font-size:17.5px;line-height:17.5px;font-weight:400;color:#1F2023;letter-spacing:0.067px;">PHÒNG KINH DOANH 02</div>
<div class="a t" style="left:1108px;top:551.49px;font-size:17.5px;line-height:17.5px;font-weight:400;color:#1F2023;letter-spacing:0.402px;">Kế toán nội bộ</div>
<div class="a t" style="left:1358px;top:551.49px;font-size:17.5px;line-height:17.5px;font-weight:400;color:#1F2023;letter-spacing:0.172px;">-</div>
<div class="a" style="left:276px;top:625px;width:1590px;height:1px;background:#E8EAEE;border-radius:0px;"></div>
<svg class="a" style="left:300px;top:594px;width:20px;height:20px;" width="20" height="20" viewBox="0 0 20 20"><rect x="1" y="1" width="18" height="18" rx="3.5" fill="#FFFFFF" stroke="#5C6270" stroke-width="2"/></svg>
<div class="a t" style="left:345.5px;top:596.49px;font-size:17.5px;line-height:17.5px;font-weight:400;color:#1F2023;letter-spacing:0.910px;">NV000033</div>
<svg class="a" style="left:595px;top:585px;width:36px;height:36px;" width="36" height="36" viewBox="0 0 36 36"><circle cx="17.5" cy="17.5" r="17.5" fill="#7B6FE8"/></svg>
<div class="a t" style="left:601px;top:595.41px;font-size:17px;line-height:17px;font-weight:700;color:#FFFFFF;letter-spacing:-0.812px;-webkit-text-stroke:0;">AP</div>
<svg class="a" style="left:612px;top:605px;width:17px;height:17px;" width="17" height="17" viewBox="0 0 17 17"><circle cx="8" cy="8.3" r="7.4" fill="#18A058" stroke="#FFFFFF" stroke-width="1.3"/><path d="M5.2,8.5 L7.3,10.4 L11,6.8" fill="none" stroke="#fff" stroke-width="1.4" stroke-linecap="round" stroke-linejoin="round"/></svg>
<div class="a t" style="left:640.5px;top:596.49px;font-size:17.5px;line-height:17.5px;font-weight:400;color:#1F2023;letter-spacing:0.154px;">a Hợp Trường Phát</div>
<div class="a t" style="left:858.5px;top:596.49px;font-size:17.5px;line-height:17.5px;font-weight:400;color:#1F2023;letter-spacing:0.404px;">Phòng Kinh doanh</div>
<div class="a t" style="left:1108px;top:596.49px;font-size:17.5px;line-height:17.5px;font-weight:400;color:#1F2023;letter-spacing:0.172px;">-</div>
<div class="a t" style="left:1358px;top:596.49px;font-size:17.5px;line-height:17.5px;font-weight:400;color:#1F2023;letter-spacing:0.172px;">-</div>
<div class="a" style="left:276px;top:670px;width:1590px;height:1px;background:#E8EAEE;border-radius:0px;"></div>
<svg class="a" style="left:300px;top:639px;width:20px;height:20px;" width="20" height="20" viewBox="0 0 20 20"><rect x="1" y="1" width="18" height="18" rx="3.5" fill="#FFFFFF" stroke="#5C6270" stroke-width="2"/></svg>
<div class="a t" style="left:345.5px;top:641.49px;font-size:17.5px;line-height:17.5px;font-weight:400;color:#1F2023;letter-spacing:0.286px;">NV000037_DEL4a6a</div>
<svg class="a" style="left:595px;top:630px;width:36px;height:36px;" width="36" height="36" viewBox="0 0 36 36"><circle cx="17.5" cy="17.5" r="17.5" fill="#FA8C0E"/></svg>
<div class="a t" style="left:601px;top:640.41px;font-size:17px;line-height:17px;font-weight:700;color:#FFFFFF;letter-spacing:0.609px;-webkit-text-stroke:0;">TT</div>
<svg class="a" style="left:612px;top:650px;width:17px;height:17px;" width="17" height="17" viewBox="0 0 17 17"><circle cx="8" cy="8.3" r="7.4" fill="#18A058" stroke="#FFFFFF" stroke-width="1.3"/><path d="M5.2,8.5 L7.3,10.4 L11,6.8" fill="none" stroke="#fff" stroke-width="1.4" stroke-linecap="round" stroke-linejoin="round"/></svg>
<div class="a t" style="left:640.5px;top:641.49px;font-size:17.5px;line-height:17.5px;font-weight:400;color:#1F2023;letter-spacing:0.144px;">Trần Phương Thảo</div>
<div class="a t" style="left:858.5px;top:641.49px;font-size:17.5px;line-height:17.5px;font-weight:400;color:#1F2023;letter-spacing:0.067px;">PHÒNG KINH DOANH 02</div>
<div class="a t" style="left:1108px;top:641.49px;font-size:17.5px;line-height:17.5px;font-weight:400;color:#1F2023;letter-spacing:0.172px;">-</div>
<div class="a t" style="left:1358px;top:641.49px;font-size:17.5px;line-height:17.5px;font-weight:400;color:#1F2023;letter-spacing:0.172px;">-</div>
<div class="a" style="left:276px;top:715px;width:1590px;height:1px;background:#E8EAEE;border-radius:0px;"></div>
<svg class="a" style="left:300px;top:684px;width:20px;height:20px;" width="20" height="20" viewBox="0 0 20 20"><rect x="1" y="1" width="18" height="18" rx="3.5" fill="#FFFFFF" stroke="#5C6270" stroke-width="2"/></svg>
<div class="a t" style="left:345.5px;top:686.49px;font-size:17.5px;line-height:17.5px;font-weight:400;color:#1F2023;letter-spacing:0.234px;">NV000042_DEL211f</div>
<svg class="a" style="left:595px;top:675px;width:36px;height:36px;" width="36" height="36" viewBox="0 0 36 36"><circle cx="17.5" cy="17.5" r="17.5" fill="#8FCB2F"/></svg>
<div class="a t" style="left:601px;top:685.41px;font-size:17px;line-height:17px;font-weight:700;color:#FFFFFF;letter-spacing:-1.281px;-webkit-text-stroke:0;">ĐH</div>
<svg class="a" style="left:612px;top:695px;width:17px;height:17px;" width="17" height="17" viewBox="0 0 17 17"><circle cx="8" cy="8.3" r="7.4" fill="#18A058" stroke="#FFFFFF" stroke-width="1.3"/><path d="M5.2,8.5 L7.3,10.4 L11,6.8" fill="none" stroke="#fff" stroke-width="1.4" stroke-linecap="round" stroke-linejoin="round"/></svg>
<div class="a t" style="left:640.5px;top:686.49px;font-size:17.5px;line-height:17.5px;font-weight:400;color:#1F2023;letter-spacing:0.314px;">Đỗ Đào Hạnh</div>
<div class="a t" style="left:858.5px;top:686.49px;font-size:17.5px;line-height:17.5px;font-weight:400;color:#1F2023;letter-spacing:0.067px;">PHÒNG KINH DOANH 02</div>
<div class="a t" style="left:1108px;top:686.49px;font-size:17.5px;line-height:17.5px;font-weight:400;color:#1F2023;letter-spacing:0.172px;">-</div>
<div class="a t" style="left:1358px;top:686.49px;font-size:17.5px;line-height:17.5px;font-weight:400;color:#1F2023;letter-spacing:0.172px;">-</div>
<div class="a" style="left:276px;top:760px;width:1590px;height:1px;background:#E8EAEE;border-radius:0px;"></div>
<svg class="a" style="left:300px;top:729px;width:20px;height:20px;" width="20" height="20" viewBox="0 0 20 20"><rect x="1" y="1" width="18" height="18" rx="3.5" fill="#FFFFFF" stroke="#5C6270" stroke-width="2"/></svg>
<div class="a t" style="left:345.5px;top:731.49px;font-size:17.5px;line-height:17.5px;font-weight:400;color:#1F2023;letter-spacing:0.348px;">NV000027_DEL839c</div>
<svg class="a" style="left:595px;top:720px;width:36px;height:36px;" width="36" height="36" viewBox="0 0 36 36"><circle cx="17.5" cy="17.5" r="17.5" fill="#9DCB32"/></svg>
<div class="a t" style="left:601px;top:730.41px;font-size:17px;line-height:17px;font-weight:700;color:#FFFFFF;letter-spacing:-0.805px;-webkit-text-stroke:0;">TG</div>
<svg class="a" style="left:612px;top:740px;width:17px;height:17px;" width="17" height="17" viewBox="0 0 17 17"><circle cx="8" cy="8.3" r="7.4" fill="#18A058" stroke="#FFFFFF" stroke-width="1.3"/><path d="M5.2,8.5 L7.3,10.4 L11,6.8" fill="none" stroke="#fff" stroke-width="1.4" stroke-linecap="round" stroke-linejoin="round"/></svg>
<div class="a t" style="left:640.5px;top:731.49px;font-size:17.5px;line-height:17.5px;font-weight:400;color:#1F2023;letter-spacing:0.347px;">Thanh Giang</div>
<div class="a t" style="left:858.5px;top:731.49px;font-size:17.5px;line-height:17.5px;font-weight:400;color:#1F2023;letter-spacing:0.067px;">PHÒNG KINH DOANH 02</div>
<div class="a t" style="left:1108px;top:731.49px;font-size:17.5px;line-height:17.5px;font-weight:400;color:#1F2023;letter-spacing:0.172px;">-</div>
<div class="a t" style="left:1358px;top:731.49px;font-size:17.5px;line-height:17.5px;font-weight:400;color:#1F2023;letter-spacing:0.172px;">-</div>
<div class="a" style="left:276px;top:805px;width:1590px;height:1px;background:#E8EAEE;border-radius:0px;"></div>
<svg class="a" style="left:300px;top:774px;width:20px;height:20px;" width="20" height="20" viewBox="0 0 20 20"><rect x="1" y="1" width="18" height="18" rx="3.5" fill="#FFFFFF" stroke="#5C6270" stroke-width="2"/></svg>
<div class="a t" style="left:345.5px;top:776.49px;font-size:17.5px;line-height:17.5px;font-weight:400;color:#1F2023;letter-spacing:0.583px;">NV00001456</div>
<svg class="a" style="left:595px;top:765px;width:36px;height:36px;" width="36" height="36" viewBox="0 0 36 36"><circle cx="17.5" cy="17.5" r="17.5" fill="#B069E0"/></svg>
<div class="a t" style="left:601px;top:775.41px;font-size:17px;line-height:17px;font-weight:700;color:#FFFFFF;letter-spacing:-1.750px;-webkit-text-stroke:0;">AQ</div>
<svg class="a" style="left:612px;top:785px;width:17px;height:17px;" width="17" height="17" viewBox="0 0 17 17"><circle cx="8" cy="8.3" r="7.4" fill="#18A058" stroke="#FFFFFF" stroke-width="1.3"/><path d="M5.2,8.5 L7.3,10.4 L11,6.8" fill="none" stroke="#fff" stroke-width="1.4" stroke-linecap="round" stroke-linejoin="round"/></svg>
<div class="a t" style="left:640.5px;top:776.49px;font-size:17.5px;line-height:17.5px;font-weight:400;color:#1F2023;letter-spacing:0.382px;">Anh Quyền</div>
<div class="a t" style="left:858.5px;top:776.49px;font-size:17.5px;line-height:17.5px;font-weight:400;color:#1F2023;letter-spacing:0.067px;">PHÒNG KINH DOANH 02</div>
<div class="a t" style="left:1108px;top:776.49px;font-size:17.5px;line-height:17.5px;font-weight:400;color:#1F2023;letter-spacing:0.172px;">-</div>
<div class="a t" style="left:1358px;top:776.49px;font-size:17.5px;line-height:17.5px;font-weight:400;color:#1F2023;letter-spacing:0.172px;">-</div>
<div class="a" style="left:276px;top:850px;width:1590px;height:1px;background:#E8EAEE;border-radius:0px;"></div>
<svg class="a" style="left:300px;top:819px;width:20px;height:20px;" width="20" height="20" viewBox="0 0 20 20"><rect x="1" y="1" width="18" height="18" rx="3.5" fill="#FFFFFF" stroke="#5C6270" stroke-width="2"/></svg>
<div class="a t" style="left:345.5px;top:821.49px;font-size:17.5px;line-height:17.5px;font-weight:400;color:#1F2023;letter-spacing:0.411px;">NV000001_DEL448e</div>
<svg class="a" style="left:595px;top:810px;width:36px;height:36px;" width="36" height="36" viewBox="0 0 36 36"><circle cx="17.5" cy="17.5" r="17.5" fill="#97CB30"/></svg>
<div class="a t" style="left:601px;top:820.41px;font-size:17px;line-height:17px;font-weight:700;color:#FFFFFF;letter-spacing:-0.812px;-webkit-text-stroke:0;">PK</div>
<svg class="a" style="left:612px;top:830px;width:17px;height:17px;" width="17" height="17" viewBox="0 0 17 17"><circle cx="8" cy="8.3" r="7.4" fill="#18A058" stroke="#FFFFFF" stroke-width="1.3"/><path d="M5.2,8.5 L7.3,10.4 L11,6.8" fill="none" stroke="#fff" stroke-width="1.4" stroke-linecap="round" stroke-linejoin="round"/></svg>
<div class="a t" style="left:640.5px;top:821.49px;font-size:17.5px;line-height:17.5px;font-weight:400;color:#1F2023;letter-spacing:0.272px;">Phạm Kim Khánh</div>
<div class="a t" style="left:858.5px;top:821.49px;font-size:17.5px;line-height:17.5px;font-weight:400;color:#1F2023;letter-spacing:0.067px;">PHÒNG KINH DOANH 02</div>
<div class="a t" style="left:1108px;top:821.49px;font-size:17.5px;line-height:17.5px;font-weight:400;color:#1F2023;letter-spacing:0.427px;">Giám đốc kinh doanh</div>
<div class="a t" style="left:1358px;top:821.49px;font-size:17.5px;line-height:17.5px;font-weight:400;color:#1F2023;letter-spacing:0.172px;">-</div>
<svg class="a" style="left:300px;top:274px;width:20px;height:20px;" width="20" height="20" viewBox="0 0 20 20"><rect x="1" y="1" width="18" height="18" rx="3.5" fill="#FFFFFF" stroke="#5C6270" stroke-width="2"/></svg>
<div class="a t" style="left:345.5px;top:277.99px;font-size:17.5px;line-height:17.5px;font-weight:400;color:#1F2023;letter-spacing:0.493px;">Mã nhân viên</div>
<div class="a t" style="left:596px;top:277.99px;font-size:17.5px;line-height:17.5px;font-weight:400;color:#1F2023;letter-spacing:0.455px;">Họ và tên</div>
<div class="a t" style="left:858.5px;top:277.99px;font-size:17.5px;line-height:17.5px;font-weight:400;color:#1F2023;letter-spacing:0.475px;">Đơn vị công tác</div>
<div class="a t" style="left:1108px;top:277.99px;font-size:17.5px;line-height:17.5px;font-weight:400;color:#1F2023;letter-spacing:0.576px;">Vị trí công việc</div>
<div class="a t" style="left:1358px;top:277.99px;font-size:17.5px;line-height:17.5px;font-weight:400;color:#1F2023;letter-spacing:0.362px;">Số hợp đồng</div>
<div class="a" style="left:276px;top:851px;width:1590px;height:27px;background:#FFFFFF;border-radius:0px;"></div>
<svg class="a" style="left:279px;top:859px;width:10px;height:14px;" width="10" height="14" viewBox="0 0 10 14"><path d="M9,0.5 V13.5 L1,7 Z" fill="#555A63"/></svg>
<div class="a" style="left:297px;top:861px;width:774px;height:11px;background:#D6D9DF;border-radius:5.5px;"></div>
<div class="a" style="left:276px;top:878px;width:1609px;height:1px;background:#DCDFE4;border-radius:0px;"></div>
<div class="a" style="left:276px;top:879px;width:1609px;height:28px;background:#F3F4F6;border-radius:0px;"></div>
<div class="a t" style="left:289px;top:899.49px;font-size:17.5px;line-height:17.5px;font-weight:400;color:#1F2023;letter-spacing:0.542px;">Tổng số bản ghi: <b>15</b></div>
<div class="a" style="left:1885px;top:184px;width:2px;height:723px;background:#EDEEF0;border-radius:0px;"></div>
<div class="a" style="left:1866px;top:300px;width:21px;height:557px;background:#F1F2F4;border-radius:0px;"></div>
<svg class="a" style="left:1867px;top:315px;width:16px;height:10px;" width="16" height="10" viewBox="0 0 16 10"><path d="M1,9 L7.5,1.5 L14,9 Z" fill="#555A63"/></svg>
<div class="a" style="left:1869px;top:332px;width:11px;height:402px;background:#D3D6DC;border-radius:5.5px;"></div>
<svg class="a" style="left:1867px;top:843px;width:16px;height:10px;" width="16" height="10" viewBox="0 0 16 10"><path d="M1,1 L7.5,8.5 L14,1 Z" fill="#555A63"/></svg>
<div class="a" style="left:1788px;top:256px;width:78px;height:1px;background:#A4A8B2;border-radius:0px;"></div>
<div class="a" style="left:1864px;top:257px;width:23px;height:43px;background:#272C40;border-radius:0px;"></div>
<div class="a t" style="left:1867px;top:270.99px;font-size:17.5px;line-height:17.5px;font-weight:400;color:#FFFFFF;">p</div>
<div class="a t" style="left:1575px;top:906.99px;font-size:17.5px;line-height:17.5px;font-weight:400;color:#1F2023;">Hiển thị 1 - 15 trên 15 bản ghi</div>
<svg class="a" style="left:1430px;top:605px;width:130px;height:80px;" width="130" height="80" viewBox="0 0 130 80"><path d="M6.2,69.8 L111,13.5" stroke="#FF0000" stroke-width="3.2" stroke-linecap="round"/><path d="M120.3,8.6 L104.8,11.6 L109.6,19.8 Z" fill="#FF0000" stroke="#FF0000" stroke-width="0.8" stroke-linejoin="round"/></svg>
<div class="a" style="left:1554px;top:257px;width:312px;height:648px;background:#FFFFFF;border-radius:5px;box-shadow:0 4px 16px rgba(0,0,0,0.14),0 0 3px rgba(0,0,0,0.06);"></div>
<svg class="a" style="left:1830px;top:245px;width:24px;height:13px;" width="24" height="13" viewBox="0 0 24 13"><path d="M1,12.5 L11.5,1 L22,12.5 Z" fill="#FFFFFF"/></svg>
<div class="a" style="left:1560px;top:269px;width:303px;height:627px;background:transparent;border-radius:0px;border:3px solid #FF0000;box-sizing:border-box;"></div>
<div class="a t" style="left:1575px;top:291.34px;font-size:25px;line-height:25px;font-weight:700;color:#1E1F22;-webkit-text-stroke:0;">Tùy chỉnh cột</div>
<svg class="a" style="left:1815px;top:293px;width:20px;height:20px;" width="20" height="20" viewBox="0 0 20 20"><path d="M2.5,2.5 L17,17 M17,2.5 L2.5,17" stroke="#5E6570" stroke-width="2.4" stroke-linecap="round"/></svg>
<div class="a t" style="left:1575px;top:354.49px;font-size:17.5px;line-height:17.5px;font-weight:700;color:#1E1F22;letter-spacing:-0.050px;-webkit-text-stroke:0;">Gom nhóm theo</div>
<div class="a" style="left:1574px;top:383px;width:259px;height:44px;background:#FFFFFF;border-radius:5px;border:1px solid #E3E5E9;box-sizing:border-box;"></div>
<svg class="a" style="left:1803px;top:398px;width:16px;height:14px;" width="16" height="14" viewBox="0 0 16 14"><path d="M2.5,4.5 L7.8,9.5 L13,4.5" fill="none" stroke="#4B5160" stroke-width="2.2" stroke-linecap="round" stroke-linejoin="round"/></svg>
<div class="a t" style="left:1574.5px;top:451.99px;font-size:17.5px;line-height:17.5px;font-weight:700;color:#1E1F22;letter-spacing:0.064px;-webkit-text-stroke:0;">Cột hiển thị</div>
<div class="a" style="left:1574px;top:481px;width:262px;height:44px;background:#FFFFFF;border-radius:6px;border:1.5px solid #7FA4EE;box-sizing:border-box;"></div>
<svg class="a" style="left:1585px;top:491px;width:24px;height:24px;" width="24" height="24" viewBox="0 0 24 24"><circle cx="12.2" cy="11.9" r="8.8" fill="none" stroke="#9CA3B4" stroke-width="2.2"/><path d="M18.5,18.3 L22.6,22.6" stroke="#9CA3B4" stroke-width="2.4" stroke-linecap="round"/></svg>
<div class="a" style="left:1619px;top:492px;width:1.5px;height:21px;background:#333333;border-radius:0px;"></div>
<div class="a t" style="left:1619px;top:496.99px;font-size:17.5px;line-height:17.5px;font-weight:400;color:#A0A7B3;letter-spacing:0.131px;">Tìm kiếm</div>
<svg class="a" style="left:1577px;top:556px;width:20px;height:20px;" width="20" height="20" viewBox="0 0 20 20"><rect x="0" y="0" width="19.5" height="19.5" rx="4" fill="#2563EB"/><path d="M5,10 L8.5,13.4 L14.8,6.6" fill="none" stroke="#FFFFFF" stroke-width="2.2" stroke-linecap="round" stroke-linejoin="round"/></svg>
<div class="a t" style="left:1615.5px;top:558.29px;font-size:17.5px;line-height:17.5px;font-weight:400;color:#2C2D31;letter-spacing:0.410px;">Mã nhân viên</div>
<svg class="a" style="left:1826px;top:557px;width:14px;height:18px;" width="14" height="18" viewBox="0 0 14 18"><g fill="#222"><circle cx="3.5" cy="2.5" r="1.45"/><circle cx="3.5" cy="8.8" r="1.45"/><circle cx="3.5" cy="15.1" r="1.45"/><circle cx="10" cy="2.5" r="1.45"/><circle cx="10" cy="8.8" r="1.45"/><circle cx="10" cy="15.1" r="1.45"/></g></svg>
<svg class="a" style="left:1577px;top:606px;width:20px;height:20px;" width="20" height="20" viewBox="0 0 20 20"><rect x="0" y="0" width="19.5" height="19.5" rx="4" fill="#2563EB"/><path d="M5,10 L8.5,13.4 L14.8,6.6" fill="none" stroke="#FFFFFF" stroke-width="2.2" stroke-linecap="round" stroke-linejoin="round"/></svg>
<div class="a t" style="left:1615.5px;top:608.29px;font-size:17.5px;line-height:17.5px;font-weight:400;color:#2C2D31;letter-spacing:0.455px;">Họ và tên</div>
<svg class="a" style="left:1826px;top:607px;width:14px;height:18px;" width="14" height="18" viewBox="0 0 14 18"><g fill="#222"><circle cx="3.5" cy="2.5" r="1.45"/><circle cx="3.5" cy="8.8" r="1.45"/><circle cx="3.5" cy="15.1" r="1.45"/><circle cx="10" cy="2.5" r="1.45"/><circle cx="10" cy="8.8" r="1.45"/><circle cx="10" cy="15.1" r="1.45"/></g></svg>
<svg class="a" style="left:1577px;top:656px;width:20px;height:20px;" width="20" height="20" viewBox="0 0 20 20"><rect x="0" y="0" width="19.5" height="19.5" rx="4" fill="#2563EB"/><path d="M5,10 L8.5,13.4 L14.8,6.6" fill="none" stroke="#FFFFFF" stroke-width="2.2" stroke-linecap="round" stroke-linejoin="round"/></svg>
<div class="a t" style="left:1615.5px;top:658.29px;font-size:17.5px;line-height:17.5px;font-weight:400;color:#2C2D31;letter-spacing:0.442px;">Đơn vị công tác</div>
<svg class="a" style="left:1826px;top:657px;width:14px;height:18px;" width="14" height="18" viewBox="0 0 14 18"><g fill="#222"><circle cx="3.5" cy="2.5" r="1.45"/><circle cx="3.5" cy="8.8" r="1.45"/><circle cx="3.5" cy="15.1" r="1.45"/><circle cx="10" cy="2.5" r="1.45"/><circle cx="10" cy="8.8" r="1.45"/><circle cx="10" cy="15.1" r="1.45"/></g></svg>
<svg class="a" style="left:1577px;top:706px;width:20px;height:20px;" width="20" height="20" viewBox="0 0 20 20"><rect x="0" y="0" width="19.5" height="19.5" rx="4" fill="#2563EB"/><path d="M5,10 L8.5,13.4 L14.8,6.6" fill="none" stroke="#FFFFFF" stroke-width="2.2" stroke-linecap="round" stroke-linejoin="round"/></svg>
<div class="a t" style="left:1615.5px;top:708.29px;font-size:17.5px;line-height:17.5px;font-weight:400;color:#2C2D31;letter-spacing:0.514px;">Vị trí công việc</div>
<svg class="a" style="left:1826px;top:707px;width:14px;height:18px;" width="14" height="18" viewBox="0 0 14 18"><g fill="#222"><circle cx="3.5" cy="2.5" r="1.45"/><circle cx="3.5" cy="8.8" r="1.45"/><circle cx="3.5" cy="15.1" r="1.45"/><circle cx="10" cy="2.5" r="1.45"/><circle cx="10" cy="8.8" r="1.45"/><circle cx="10" cy="15.1" r="1.45"/></g></svg>
<svg class="a" style="left:1577px;top:756px;width:20px;height:20px;" width="20" height="20" viewBox="0 0 20 20"><rect x="0" y="0" width="19.5" height="19.5" rx="4" fill="#2563EB"/><path d="M5,10 L8.5,13.4 L14.8,6.6" fill="none" stroke="#FFFFFF" stroke-width="2.2" stroke-linecap="round" stroke-linejoin="round"/></svg>
<div class="a t" style="left:1615.5px;top:758.29px;font-size:17.5px;line-height:17.5px;font-weight:400;color:#2C2D31;letter-spacing:0.271px;">Số hợp đồng</div>
<svg class="a" style="left:1826px;top:757px;width:14px;height:18px;" width="14" height="18" viewBox="0 0 14 18"><g fill="#222"><circle cx="3.5" cy="2.5" r="1.45"/><circle cx="3.5" cy="8.8" r="1.45"/><circle cx="3.5" cy="15.1" r="1.45"/><circle cx="10" cy="2.5" r="1.45"/><circle cx="10" cy="8.8" r="1.45"/><circle cx="10" cy="15.1" r="1.45"/></g></svg>
<svg class="a" style="left:1577px;top:806px;width:20px;height:20px;" width="20" height="20" viewBox="0 0 20 20"><rect x="0" y="0" width="19.5" height="19.5" rx="4" fill="#2563EB"/><path d="M5,10 L8.5,13.4 L14.8,6.6" fill="none" stroke="#FFFFFF" stroke-width="2.2" stroke-linecap="round" stroke-linejoin="round"/></svg>
<div class="a t" style="left:1615.5px;top:808.29px;font-size:17.5px;line-height:17.5px;font-weight:400;color:#2C2D31;letter-spacing:0.332px;">Loại hợp đồng</div>
<svg class="a" style="left:1826px;top:807px;width:14px;height:18px;" width="14" height="18" viewBox="0 0 14 18"><g fill="#222"><circle cx="3.5" cy="2.5" r="1.45"/><circle cx="3.5" cy="8.8" r="1.45"/><circle cx="3.5" cy="15.1" r="1.45"/><circle cx="10" cy="2.5" r="1.45"/><circle cx="10" cy="8.8" r="1.45"/><circle cx="10" cy="15.1" r="1.45"/></g></svg>
<div class="a" style="left:1847px;top:549px;width:10px;height:84px;background:#D5D8DE;border-radius:5px;"></div>
<div class="a" style="left:1563px;top:827px;width:297px;height:1px;background:#E9EBEE;border-radius:0px;"></div>
<div class="a" style="left:1574px;top:830px;width:289px;height:1px;background:transparent;border-radius:0px;"></div>
<div class="a" style="left:1596px;top:843px;width:118px;height:45px;background:#E8E9EE;border-radius:6px;"></div>
<div class="a t" style="left:1616.5px;top:858.99px;font-size:17.5px;line-height:17.5px;font-weight:400;color:#1E1F22;letter-spacing:0.686px;">Mặc định</div>
<div class="a" style="left:1724px;top:843px;width:100px;height:45px;background:#7FA6EE;border-radius:6px;"></div>
<div class="a t" style="left:1757.5px;top:858.99px;font-size:17.5px;line-height:17.5px;font-weight:400;color:#FFFFFF;letter-spacing:-0.062px;">Lưu</div>
<div class="a" style="left:1572px;top:647px;width:30px;height:138px;background:transparent;border-radius:0px;border:3px solid #FF0000;box-sizing:border-box;"></div>
<div class="a" style="left:1817px;top:648px;width:30px;height:34px;background:transparent;border-radius:0px;border:3px solid #FF0000;box-sizing:border-box;"></div>
</body></html>
